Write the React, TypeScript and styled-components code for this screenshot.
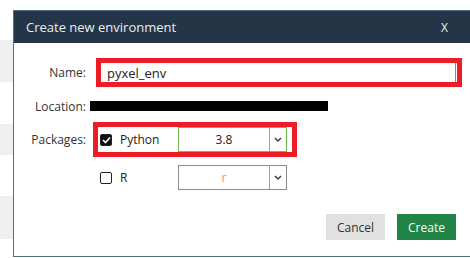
import React from "react";
import styled, { createGlobalStyle } from "styled-components";

const GlobalStyle = createGlobalStyle`
  html, body { margin: 0; padding: 0; background: #ffffff; overflow: hidden; }
  body { font-family: "Open Sans", "Noto Sans", sans-serif; }
  * { box-sizing: border-box; }
`;

const Page = styled.div`
  position: relative;
  width: 470px;
  height: 258px;
  overflow: hidden;
  background: #ffffff;
`;

const Backdrop = styled.div`
  display: flex;
  flex-direction: column;
`;

const Stripe = styled.div<{ $h: number; $shade?: boolean }>`
  height: ${(p) => p.$h}px;
  background: ${(p) => (p.$shade ? "#efefef" : "#ffffff")};
`;

const Dialog = styled.div`
  position: absolute;
  left: 13px;
  top: 10px;
  width: 470px;
  height: 247px;
  border: 1px solid #4f6f86;
  background: #ffffff;
  display: flex;
  flex-direction: column;
`;

const TitleBar = styled.div`
  height: 32px;
  flex: none;
  background: #243547;
  color: #e8eef2;
  display: flex;
  align-items: center;
  justify-content: space-between;
  padding: 0 34px 0 12px;
  font-size: 13px;
`;

const Close = styled.span`
  font-size: 12px;
`;

const Body = styled.div`
  flex: 1;
  display: flex;
  flex-direction: column;
  padding: 15px 20px 0 0;
`;

const Row = styled.div<{ $top: number; $h: number }>`
  display: grid;
  grid-template-columns: 72px 1fr;
  column-gap: 4px;
  align-items: center;
  margin-top: ${(p) => p.$top}px;
  height: ${(p) => p.$h}px;
`;

const Label = styled.div`
  text-align: right;
  font-size: 12px;
  color: #333333;
`;

const Highlight = styled.div<{ $on?: boolean; $indent: number; $fit?: boolean }>`
  border: 5px solid ${(p) => (p.$on ? "#ee1d25" : "transparent")};
  margin-left: ${(p) => p.$indent}px;
  display: flex;
  align-items: center;
  justify-self: ${(p) => (p.$fit ? "start" : "stretch")};
`;

const NameInput = styled.div`
  flex: 1;
  height: 19px;
  display: flex;
  align-items: center;
  padding-left: 6px;
  font-size: 13px;
  color: #222222;
  border-right: 1px solid #8a8a8a;
  margin-right: 1px;
`;

const Redacted = styled.div`
  width: 238px;
  height: 10px;
  background: #000000;
`;

const Box = styled.span<{ $checked?: boolean }>`
  width: 12px;
  height: 12px;
  margin-left: 2px;
  border-radius: 2px;
  flex: none;
  display: flex;
  align-items: center;
  justify-content: center;
  background: ${(p) => (p.$checked ? "#111111" : "#ffffff")};
  border: 1.5px solid #222222;
`;

const PkgName = styled.span`
  width: 58px;
  margin-left: 8px;
  font-size: 12px;
  color: #222222;
`;

const Select = styled.div<{ $active?: boolean }>`
  width: 109px;
  height: 25px;
  margin-right: 5px;
  display: flex;
  border: 1px solid ${(p) => (p.$active ? "#6cbf4a" : "#8c8c8c")};
`;

const SelectValue = styled.div<{ $muted?: boolean }>`
  flex: 1;
  display: flex;
  align-items: center;
  justify-content: center;
  font-size: 12px;
  color: ${(p) => (p.$muted ? "#c39a8c" : "#222222")};
  border-right: 1px solid #a0a0a0;
`;

const Arrow = styled.div`
  width: 16px;
  display: flex;
  align-items: center;
  justify-content: center;
`;

const Footer = styled.div`
  margin-top: auto;
  display: flex;
  justify-content: flex-end;
  gap: 12px;
  padding: 0 6px 16px 0;
`;

const Button = styled.button<{ $primary?: boolean }>`
  width: 59px;
  height: 26px;
  border: none;
  padding: 0;
  font-family: inherit;
  font-size: 12px;
  background: ${(p) => (p.$primary ? "#1f8445" : "#e1e1e1")};
  color: ${(p) => (p.$primary ? "#ffffff" : "#333333")};
`;

const Chevron = () => (
  <svg width="8" height="5" viewBox="0 0 8 5">
    <path d="M1 1 L4 4 L7 1" fill="none" stroke="#333" strokeWidth="1.4" />
  </svg>
);

const Check = () => (
  <svg width="9" height="8" viewBox="0 0 9 8">
    <path d="M1 4 L3.5 6.5 L8 1.5" fill="none" stroke="#fff" strokeWidth="1.6" />
  </svg>
);

export default function App() {
  return (
    <Page>
      <GlobalStyle />
      <Backdrop>
        <Stripe $h={40} />
        <Stripe $h={42} $shade />
        <Stripe $h={42} />
        <Stripe $h={31} $shade />
        <Stripe $h={41} />
        <Stripe $h={43} $shade />
      </Backdrop>
      <Dialog>
        <TitleBar>
          <span>Create new environment</span>
          <Close>X</Close>
        </TitleBar>
        <Body>
          <Row $top={0} $h={29}>
            <Label>Name:</Label>
            <Highlight $on $indent={6}>
              <NameInput>pyxel_env</NameInput>
            </Highlight>
          </Row>
          <Row $top={10} $h={18}>
            <Label>Location:</Label>
            <Redacted />
          </Row>
          <Row $top={7} $h={35}>
            <Label>Packages:</Label>
            <Highlight $on $indent={3} $fit>
              <Box $checked>
                <Check />
              </Box>
              <PkgName>Python</PkgName>
              <Select $active>
                <SelectValue>3.8</SelectValue>
                <Arrow>
                  <Chevron />
                </Arrow>
              </Select>
            </Highlight>
          </Row>
          <Row $top={3} $h={35}>
            <Label />
            <Highlight $indent={3} $fit>
              <Box />
              <PkgName>R</PkgName>
              <Select>
                <SelectValue $muted>r</SelectValue>
                <Arrow>
                  <Chevron />
                </Arrow>
              </Select>
            </Highlight>
          </Row>
          <Footer>
            <Button>Cancel</Button>
            <Button $primary>Create</Button>
          </Footer>
        </Body>
      </Dialog>
    </Page>
  );
}
